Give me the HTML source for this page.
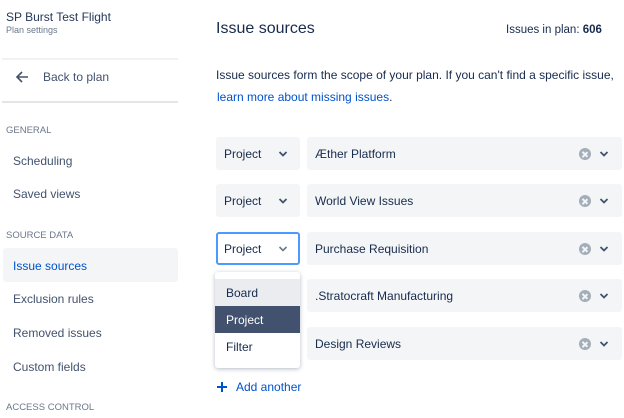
<!DOCTYPE html>
<html><head><meta charset="utf-8"><style>
*{margin:0;padding:0;box-sizing:border-box}
body{width:624px;height:418px;overflow:hidden;background:#fff;font-family:"Liberation Sans",sans-serif;color:#172b4d;position:relative}
.a{position:absolute;white-space:nowrap}
.nav{font-size:12px;color:#42526e;left:13px}
.sec{font-size:9.5px;color:#6b778c;left:6px}
.box{position:absolute;background:#f4f5f7;border-radius:3px;height:33px}
.bt{position:absolute;font-size:12px;color:#172b4d;top:10px}
.chev{position:absolute;width:10px;height:6px}
.clr{position:absolute;width:12px;height:12px;border-radius:50%;background:#a5adba}
.clr::before,.clr::after{content:"";position:absolute;left:5.25px;top:2.5px;width:1.5px;height:7px;background:#f4f5f7;transform:rotate(45deg)}.clr::after{transform:rotate(-45deg)}
</style></head><body>
<div class="a" style="left:6px;top:10px;font-size:12px;color:#253858">SP Burst Test Flight</div>
<div class="a" style="left:6px;top:25px;font-size:9px;color:#6b778c">Plan settings</div>
<div class="a" style="left:2px;top:58px;width:176px;height:2px;background:#f1f2f4"></div>
<svg class="a" style="left:15px;top:70px" width="14" height="14" viewBox="0 0 14 14"><path d="M13 7H2M7 2L2 7l5 5" stroke="#42526e" stroke-width="1.6" fill="none"/></svg>
<div class="a" style="left:43px;top:70px;font-size:12px;color:#42526e">Back to plan</div>
<div class="a" style="left:2px;top:101px;width:176px;height:2px;background:#e4e5e9"></div>
<div class="a sec" style="top:125px">GENERAL</div>
<div class="a nav" style="top:154px">Scheduling</div>
<div class="a nav" style="top:187px">Saved views</div>
<div class="a sec" style="top:230px">SOURCE DATA</div>
<div class="a" style="left:3px;top:248px;width:175px;height:34px;background:#f4f5f7;border-radius:3px"></div>
<div class="a nav" style="top:259px;color:#0052cc">Issue sources</div>
<div class="a nav" style="top:292px">Exclusion rules</div>
<div class="a nav" style="top:326px">Removed issues</div>
<div class="a nav" style="top:360px">Custom fields</div>
<div class="a sec" style="top:402px">ACCESS CONTROL</div>

<div class="a" style="left:216px;top:20px;font-size:16px;color:#172b4d">Issue sources</div>
<div class="a" style="left:506px;top:24px;font-size:11.5px;color:#172b4d">Issues in plan: <b>606</b></div>
<div class="a" style="left:216px;top:68px;font-size:12px;color:#172b4d">Issue sources form the scope of your plan. If you can't find a specific issue,</div>
<div class="a" style="left:217px;top:90px;font-size:12px;color:#0052cc">learn more about missing issues<span style="color:#172b4d">.</span></div>

<div class="box" style="left:216px;top:137px;width:84px"><span class="bt" style="left:8px">Project</span><svg class="chev" style="left:62px;top:14px" viewBox="0 0 10 6"><path d="M1.5 1l3.5 3.5L8.5 1" stroke="#42526e" stroke-width="1.8" fill="none"/></svg></div>
<div class="box" style="left:307px;top:137px;width:315px"><span class="bt" style="left:8px">Æther Platform</span><div class="clr" style="left:272px;top:11px"></div><svg class="chev" style="left:292px;top:14px" viewBox="0 0 10 6"><path d="M1.5 1l3.5 3.5L8.5 1" stroke="#42526e" stroke-width="1.8" fill="none"/></svg></div>

<div class="box" style="left:216px;top:184px;width:84px"><span class="bt" style="left:8px">Project</span><svg class="chev" style="left:62px;top:14px" viewBox="0 0 10 6"><path d="M1.5 1l3.5 3.5L8.5 1" stroke="#42526e" stroke-width="1.8" fill="none"/></svg></div>
<div class="box" style="left:307px;top:184px;width:315px"><span class="bt" style="left:8px">World View Issues</span><div class="clr" style="left:272px;top:11px"></div><svg class="chev" style="left:292px;top:14px" viewBox="0 0 10 6"><path d="M1.5 1l3.5 3.5L8.5 1" stroke="#42526e" stroke-width="1.8" fill="none"/></svg></div>

<div class="box" style="left:216px;top:232px;width:84px;background:#fff;border:2px solid #4c9aff"><span class="bt" style="left:6px;top:8px">Project</span><svg class="chev" style="left:60px;top:12px" viewBox="0 0 10 6"><path d="M1.5 1l3.5 3.5L8.5 1" stroke="#6b778c" stroke-width="1.6" fill="none"/></svg></div>
<div class="box" style="left:307px;top:232px;width:315px"><span class="bt" style="left:8px">Purchase Requisition</span><div class="clr" style="left:272px;top:11px"></div><svg class="chev" style="left:292px;top:14px" viewBox="0 0 10 6"><path d="M1.5 1l3.5 3.5L8.5 1" stroke="#42526e" stroke-width="1.8" fill="none"/></svg></div>

<div class="box" style="left:307px;top:279px;width:315px"><span class="bt" style="left:8px">.Stratocraft Manufacturing</span><div class="clr" style="left:272px;top:11px"></div><svg class="chev" style="left:292px;top:14px" viewBox="0 0 10 6"><path d="M1.5 1l3.5 3.5L8.5 1" stroke="#42526e" stroke-width="1.8" fill="none"/></svg></div>
<div class="box" style="left:307px;top:327px;width:315px"><span class="bt" style="left:8px">Design Reviews</span><div class="clr" style="left:272px;top:11px"></div><svg class="chev" style="left:292px;top:14px" viewBox="0 0 10 6"><path d="M1.5 1l3.5 3.5L8.5 1" stroke="#42526e" stroke-width="1.8" fill="none"/></svg></div>

<div class="a" style="left:215px;top:272px;width:85px;height:96px;background:#fff;border-radius:3px;box-shadow:0 1px 4px rgba(9,30,66,.3)">
<div class="a" style="left:0;top:7px;width:85px;height:27px;background:#ebecf0"></div>
<div class="a" style="left:11px;top:14px;font-size:12px;color:#172b4d">Board</div>
<div class="a" style="left:0;top:34px;width:85px;height:27px;background:#42526e"></div>
<div class="a" style="left:11px;top:41px;font-size:12px;color:#fff">Project</div>
<div class="a" style="left:11px;top:68px;font-size:12px;color:#172b4d">Filter</div>
</div>

<svg class="a" style="left:216px;top:381px" width="12" height="12" viewBox="0 0 12 12"><path d="M6 1v10M1 6h10" stroke="#0052cc" stroke-width="2"/></svg>
<div class="a" style="left:236px;top:380px;font-size:12px;color:#0052cc">Add another</div>
</body></html>
